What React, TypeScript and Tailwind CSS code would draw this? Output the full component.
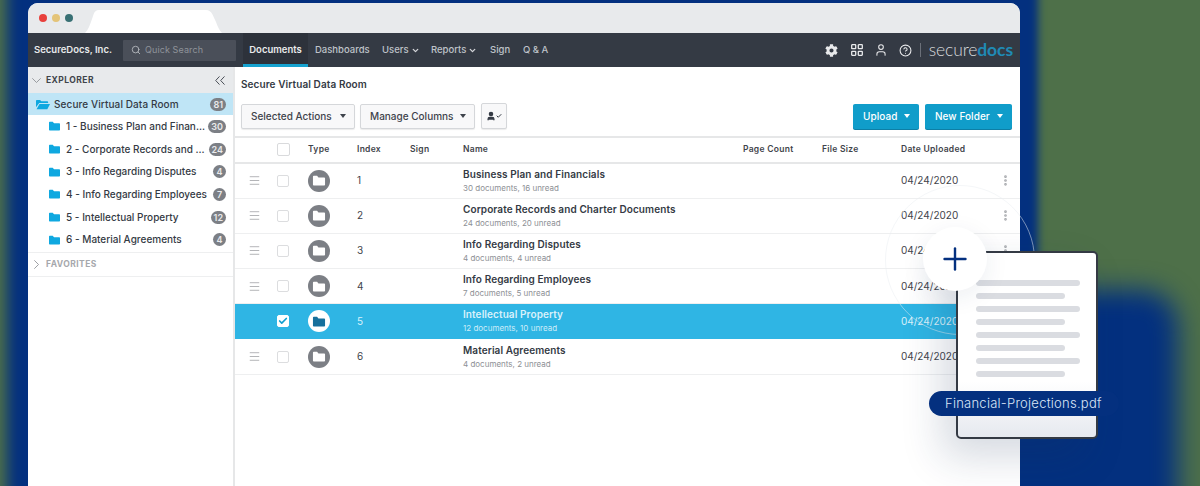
import React from "react";
import { User, Search, ChevronDown, Plus, CircleHelp, EllipsisVertical, Menu, Check } from "lucide-react";
import { FaCog } from "react-icons/fa";

const font = { fontFamily: "Inter, 'Liberation Sans', sans-serif" };

function FolderIcon({ className = "", fill = "#0fa8e0" }: { className?: string; fill?: string }) {
  return (
    <svg viewBox="0 0 24 20" className={className}>
      <path d="M1 3a1.5 1.5 0 0 1 1.5-1.5h6L11 4.5h10.5A1.5 1.5 0 0 1 23 6v11.5a1.5 1.5 0 0 1-1.5 1.5h-19A1.5 1.5 0 0 1 1 17.500z" fill={fill} />
    </svg>
  );
}

function OpenFolder() {
  return (
    <svg viewBox="0 0 26 20" className="h-[11px] w-[14px] shrink-0">
      <path d="M0 3a1.500 1.500 0 0 1 1.500-1.500h6L10 4h11a1.500 1.500 0 0 1 1.500 1.500V7H6L0 15z" fill="#0fa8e0" />
      <path d="M6.500 9H26l-5 10H1z" fill="#0fa8e0" />
    </svg>
  );
}

function Badge({ n }: { n: number }) {
  return (
    <span className="ml-auto flex h-[13px] min-w-[13px] shrink-0 items-center justify-center rounded-full bg-[#7c7f85] px-[3px] text-[9px] font-semibold leading-none text-[#e9eaec]">
      {n}
    </span>
  );
}

const tree = [
  ["1 - Business Plan and Finan...", 30],
  ["2 - Corporate Records and ...", 24],
  ["3 - Info Regarding Disputes", 4],
  ["4 - Info Regarding Employees", 7],
  ["5 - Intellectual Property", 12],
  ["6 - Material Agreements", 4],
] as const;

const rows = [
  ["Business Plan and Financials", "30 documents, 16 unread"],
  ["Corporate Records and Charter Documents", "24 documents, 20 unread"],
  ["Info Regarding Disputes", "4 documents, 4 unread"],
  ["Info Regarding Employees", "7 documents, 5 unread"],
  ["Intellectual Property", "12 documents, 10 unread"],
  ["Material Agreements", "4 documents, 2 unread"],
];

function Caret({ className = "" }: { className?: string }) {
  return <span className={"h-0 w-0 border-x-[3.5px] border-t-[4px] border-x-transparent " + className} />;
}

function Btn({ label, w }: { label: string; w: string }) {
  return (
    <div className={"flex h-[25px] items-center justify-between whitespace-nowrap rounded-[2px] border border-[#d5d7da] bg-[#f8f8f9] pl-[9px] pr-[8px] text-[10px] font-medium text-[#3e434b] shadow-[0_1px_1px_rgba(0,0,0,0.08)] " + w}>
      {label}
      <Caret className="border-t-[#3e434b]" />
    </div>
  );
}

function PrimaryBtn({ label, w }: { label: string; w: string }) {
  return (
    <div className={"flex h-[25px] items-center justify-between whitespace-nowrap rounded-[2px] bg-[#109dca] pl-[10px] pr-[9px] text-[10px] font-medium tracking-[0.05px] text-white shadow-[0_1px_0_#0d7fa6] " + w}>
      {label}
      <Caret className="border-t-white" />
    </div>
  );
}

function NavItem({ label, caret = false, w }: { label: string; caret?: boolean; w: string }) {
  return (
    <div className={"flex items-center gap-[2px] whitespace-nowrap text-[9.5px] font-medium text-[#bfc3c9] " + w}>
      {label}
      {caret && <ChevronDown size={9} strokeWidth={3.5} className="text-[#d4d6da]" />}
    </div>
  );
}

export default function App() {
  return (
    <div style={font} className="relative h-[486px] w-[1200px] overflow-hidden bg-[#4e7049]">
      <div className="absolute left-[7px] top-[-40px] h-[580px] w-[500px] rounded-[26px] bg-[#03307f] blur-[7px]" />
      <div className="absolute left-[300px] top-[-30px] h-[560px] w-[738px] rounded-[20px] bg-[#03307f] blur-[4px]" />
      <div className="absolute left-[900px] top-[290px] h-[260px] w-[278px] rounded-[36px] bg-[#03307f] blur-[13px]" />

      <div className="relative ml-[28px] mt-[3px] flex h-[483px] w-[992px] flex-col overflow-hidden rounded-t-[10px] bg-white">
        {/* title bar */}
        <div className="relative h-[30px] shrink-0 bg-[#e8eaec]">
          <div className="absolute left-[11px] top-[10.500px] flex gap-[5px]">
            <span className="h-[8px] w-[8px] rounded-full bg-[#e8403c]" />
            <span className="h-[8px] w-[8px] rounded-full bg-[#e4c478]" />
            <span className="h-[8px] w-[8px] rounded-full bg-[#387074]" />
          </div>
          <svg viewBox="0 0 137 23" className="absolute bottom-0 left-[57px] h-[23px] w-[137px]">
            <path d="M0 23C3 20 5 15 7 9L8.500 4.500C9.500 1.500 11 0 14 0H121C124 0 126 1.500 127.500 4.500L131 12C133 17 134 20 137 23z" fill="#fff" />
          </svg>
        </div>

        {/* nav */}
        <div className="flex h-[34px] shrink-0 items-center bg-[#343a44]">
          <div className="w-[95px] whitespace-nowrap pl-[6px] text-[9.5px] font-semibold text-[#e8e9eb]">SecureDocs, Inc.</div>
          <div className="flex h-[21px] w-[113px] items-center gap-[4px] rounded-[1px] bg-[#4a4f59] pl-[8px] text-[9px] tracking-[0.1px] text-[#8f939a]">
            <Search size={10} strokeWidth={2.2} className="text-[#b4b7bc]" />
            Quick Search
          </div>
          <div className="ml-[7px] flex h-full w-[65px] items-center justify-center border-b-[3px] border-[#16a2cf] bg-[#2d323b] pt-[3px] text-[9.5px] font-semibold text-[#e9eaec]">
            Documents
          </div>
          <div className="ml-[7px] flex">
            <NavItem label="Dashboards" w="w-[67px]" />
            <NavItem label="Users" caret w="w-[49px]" />
            <NavItem label="Reports" caret w="w-[59px]" />
            <NavItem label="Sign" w="w-[33px]" />
            <NavItem label="Q & A" w="w-[40px]" />
          </div>
          <div className="ml-auto flex items-center">
            <FaCog size={13} className="text-[#e8e9eb]" />
            <svg viewBox="0 0 12 12" className="ml-[13px] h-[12px] w-[12px]" fill="none" stroke="#e8e9eb" strokeWidth="1.300">
              <rect x="0.700" y="0.700" width="4" height="4" rx="0.500" />
              <rect x="7.300" y="0.700" width="4" height="4" rx="0.500" />
              <rect x="0.700" y="7.300" width="4" height="4" rx="0.500" />
              <rect x="7.300" y="7.300" width="4" height="4" rx="0.500" />
            </svg>
            <User size={14} strokeWidth={1.800} className="ml-[11px] text-[#e8e9eb]" />
            <CircleHelp size={13} strokeWidth={2} className="ml-[11px] text-[#e8e9eb]" />
            <span className="ml-[8px] h-[14px] w-px bg-[#6b7079]" />
            <span className="ml-[8px] mr-[7px] text-[17.500px] leading-none tracking-[-0.1px] text-[#d8dadd]" style={{ fontFamily: "Lato, sans-serif", fontWeight: 300 }}>
              secure<span className="font-bold text-[#1f8ab5]">docs</span>
            </span>
          </div>
        </div>

        {/* body */}
        <div className="flex min-h-0 flex-1">
          {/* sidebar */}
          <div className="w-[207px] shrink-0 border-r-2 border-[#e6e7e8] bg-white">
            <div className="flex h-[26px] items-center bg-[#e8eaec] pl-[4px] pr-[8px]">
              <svg viewBox="0 0 9 5" className="h-[5px] w-[9px]" fill="none" stroke="#85888d" strokeWidth="0.800">
                <path d="M0.300 0.300L4.500 4.500L8.700 0.300" />
              </svg>
              <span className="ml-[5px] text-[8.5px] font-bold tracking-[0.45px] text-[#3f444b]">EXPLORER</span>
              <svg viewBox="0 0 10 9" className="ml-auto h-[9px] w-[10px]" fill="none" stroke="#4b5058" strokeWidth="1">
                <path d="M4.500 0.400L0.700 4.500L4.500 8.600M9.500 0.400L5.700 4.500L9.500 8.600" />
              </svg>
            </div>
            <div className="flex h-[22px] items-center bg-[#bfe5f6] pl-[8px] pr-[7px] text-[10px] font-medium text-[#343a44]">
              <OpenFolder />
              <span className="ml-[4px] -translate-y-[0.500px] tracking-[0.1px]">Secure Virtual Data Room</span>
              <Badge n={81} />
            </div>
            <div>
              {tree.map(([t, n]) => (
                <div key={t} className="flex h-[22.700px] items-center pl-[20px] pr-[7px] text-[10px] font-medium text-[#343a44]">
                  <FolderIcon className="h-[10px] w-[13px] shrink-0" />
                  <span className="ml-[5px] whitespace-nowrap">{t}</span>
                  <Badge n={n} />
                </div>
              ))}
            </div>
            <div className="mt-[1px] flex h-[25px] items-center border-y border-[#eeeff0] pl-[6px] text-[8.5px] font-bold tracking-[0.45px] text-[#a6a8ac]">
              <svg viewBox="0 0 5 9" className="h-[9px] w-[5px]" fill="none" stroke="#85888d" strokeWidth="0.800">
                <path d="M0.300 0.300L4.500 4.500L0.300 8.700" />
              </svg>
              <span className="ml-[7px]">FAVORITES</span>
            </div>
          </div>

          {/* main */}
          <div className="min-w-0 flex-1">
            <div className="pl-[6px] pt-[11px] text-[10px] font-semibold leading-[13px] tracking-[0.1px] text-[#343a44]">Secure Virtual Data Room</div>
            <div className="mt-[12px] flex items-center pl-[6px] pr-[8px]">
              <Btn label="Selected Actions" w="w-[114px]" />
              <div className="ml-[5px]"><Btn label="Manage Columns" w="w-[115px]" /></div>
              <div className="ml-[6px] flex h-[26px] w-[26px] items-center justify-center rounded-[2px] border border-[#d5d7da] bg-[#f8f8f9] shadow-[0_1px_1px_rgba(0,0,0,0.08)]">
                <User size={10} strokeWidth={3} fill="#343a44" className="text-[#343a44]" />
                <Check size={6} strokeWidth={4} className="text-[#343a44]" />
              </div>
              <div className="ml-auto flex gap-[6px]">
                <PrimaryBtn label="Upload" w="w-[66px]" />
                <PrimaryBtn label="New Folder" w="w-[87px]" />
              </div>
            </div>

            <div className="mt-[7px] border-t-2 border-[#e6e7e8]">
              <div className="relative flex h-[23.500px] items-center text-[8.5px] font-semibold tracking-[0.28px] text-[#3f444b]">
                <span className="ml-[42px] h-[13px] w-[13px] rounded-[2px] border border-[#d9dadc] bg-white" />
                <span className="ml-[18px] w-[49px]">Type</span>
                <span className="w-[53px]">Index</span>
                <span className="w-[53px]">Sign</span>
                <span className="w-[280px]">Name</span>
                <span className="w-[79px]">Page Count</span>
                <span className="w-[79px]">File Size</span>
                <span>Date Uploaded</span>
              </div>
              <div className="h-[2px] bg-[#e6e7e8]" />
              {rows.map(([name, sub], i) => {
                const sel = i === 4;
                return (
                  <div key={name} className={"flex h-[35.200px] items-center border-b " + (sel ? "border-[#2fb5e4] bg-[#2fb5e4]" : "border-[#eeeff0] bg-white")}>
                    <div className="ml-[13px] w-[13px]">
                      {!sel && <Menu size={13} strokeWidth={1.500} className="text-[#a2a4a8]" />}
                    </div>
                    <span className={"ml-[16px] flex h-[12px] w-[12px] items-center justify-center rounded-[2px] border " + (sel ? "border-white bg-white" : "border-[#dcdddf] bg-white")}>
                      {sel && <Check size={10} strokeWidth={4} className="text-[#129fd0]" />}
                    </span>
                    <span className={"ml-[19px] flex h-[22px] w-[22px] items-center justify-center rounded-full " + (sel ? "bg-white" : "bg-[#7c7f85]")}>
                      <FolderIcon className="h-[11px] w-[14px]" fill={sel ? "#16709c" : "#ffffff"} />
                    </span>
                    <span className={"ml-[27px] w-[106px] text-[10px] " + (sel ? "text-[#d9f1fb]" : "text-[#3f444b]")}>{i + 1}</span>
                    <div className="w-[438px]">
                      <div className={"text-[10px] font-semibold leading-[14px] tracking-[0.1px] " + (sel ? "text-[#d9f1fb]" : "text-[#343a44]")}>{name}</div>
                      <div className={"text-[8px] leading-[14px] " + (sel ? "text-[#cdecf9]" : "text-[#8d9095]")}>{sub}</div>
                    </div>
                    <span className={"w-[98px] text-[10px] " + (sel ? "text-[#d9f1fb]" : "text-[#3f444b]")}>04/24/2020</span>
                    {!sel && <EllipsisVertical size={13} strokeWidth={3} className="text-[#a8aaae]" />}
                  </div>
                );
              })}
            </div>
          </div>
        </div>
      </div>

      {/* dragged file overlay */}
      <div className="absolute left-[885px] top-[185px] h-[150px] w-[150px] rounded-full border border-[#e9edf2] opacity-50" />
      <div className="absolute left-[956px] top-[251px] flex h-[188px] w-[142px] flex-col gap-[7px] rounded-[5px] border-2 border-[#343a44] bg-gradient-to-b from-white from-70% to-[#e6e9ef] pl-[18px] pt-[27px] shadow-[-14px_18px_40px_rgba(30,50,90,0.18)]">
        {[0, 1, 2, 3, 4, 5, 6, 7].map((k) => (
          <span key={k} className={"h-[6px] rounded-full bg-[#dadce1] " + (k % 2 ? "w-[89px]" : "w-[104px]")} />
        ))}
      </div>
      <div className="absolute left-[923px] top-[227px] flex h-[64px] w-[64px] items-center justify-center rounded-full bg-white shadow-[0_6px_24px_rgba(30,50,90,0.08)]">
        <Plus size={36} strokeWidth={1.600} className="text-[#04307f]" />
      </div>
      <div className="absolute left-[929px] top-[391px] flex h-[25px] w-[190px] items-center rounded-full bg-[#04307f] pl-[16px] text-[13px] font-light tracking-[0.25px] text-[#dbe6f7]">
        Financial-Projections.pdf
      </div>
    </div>
  );
}
